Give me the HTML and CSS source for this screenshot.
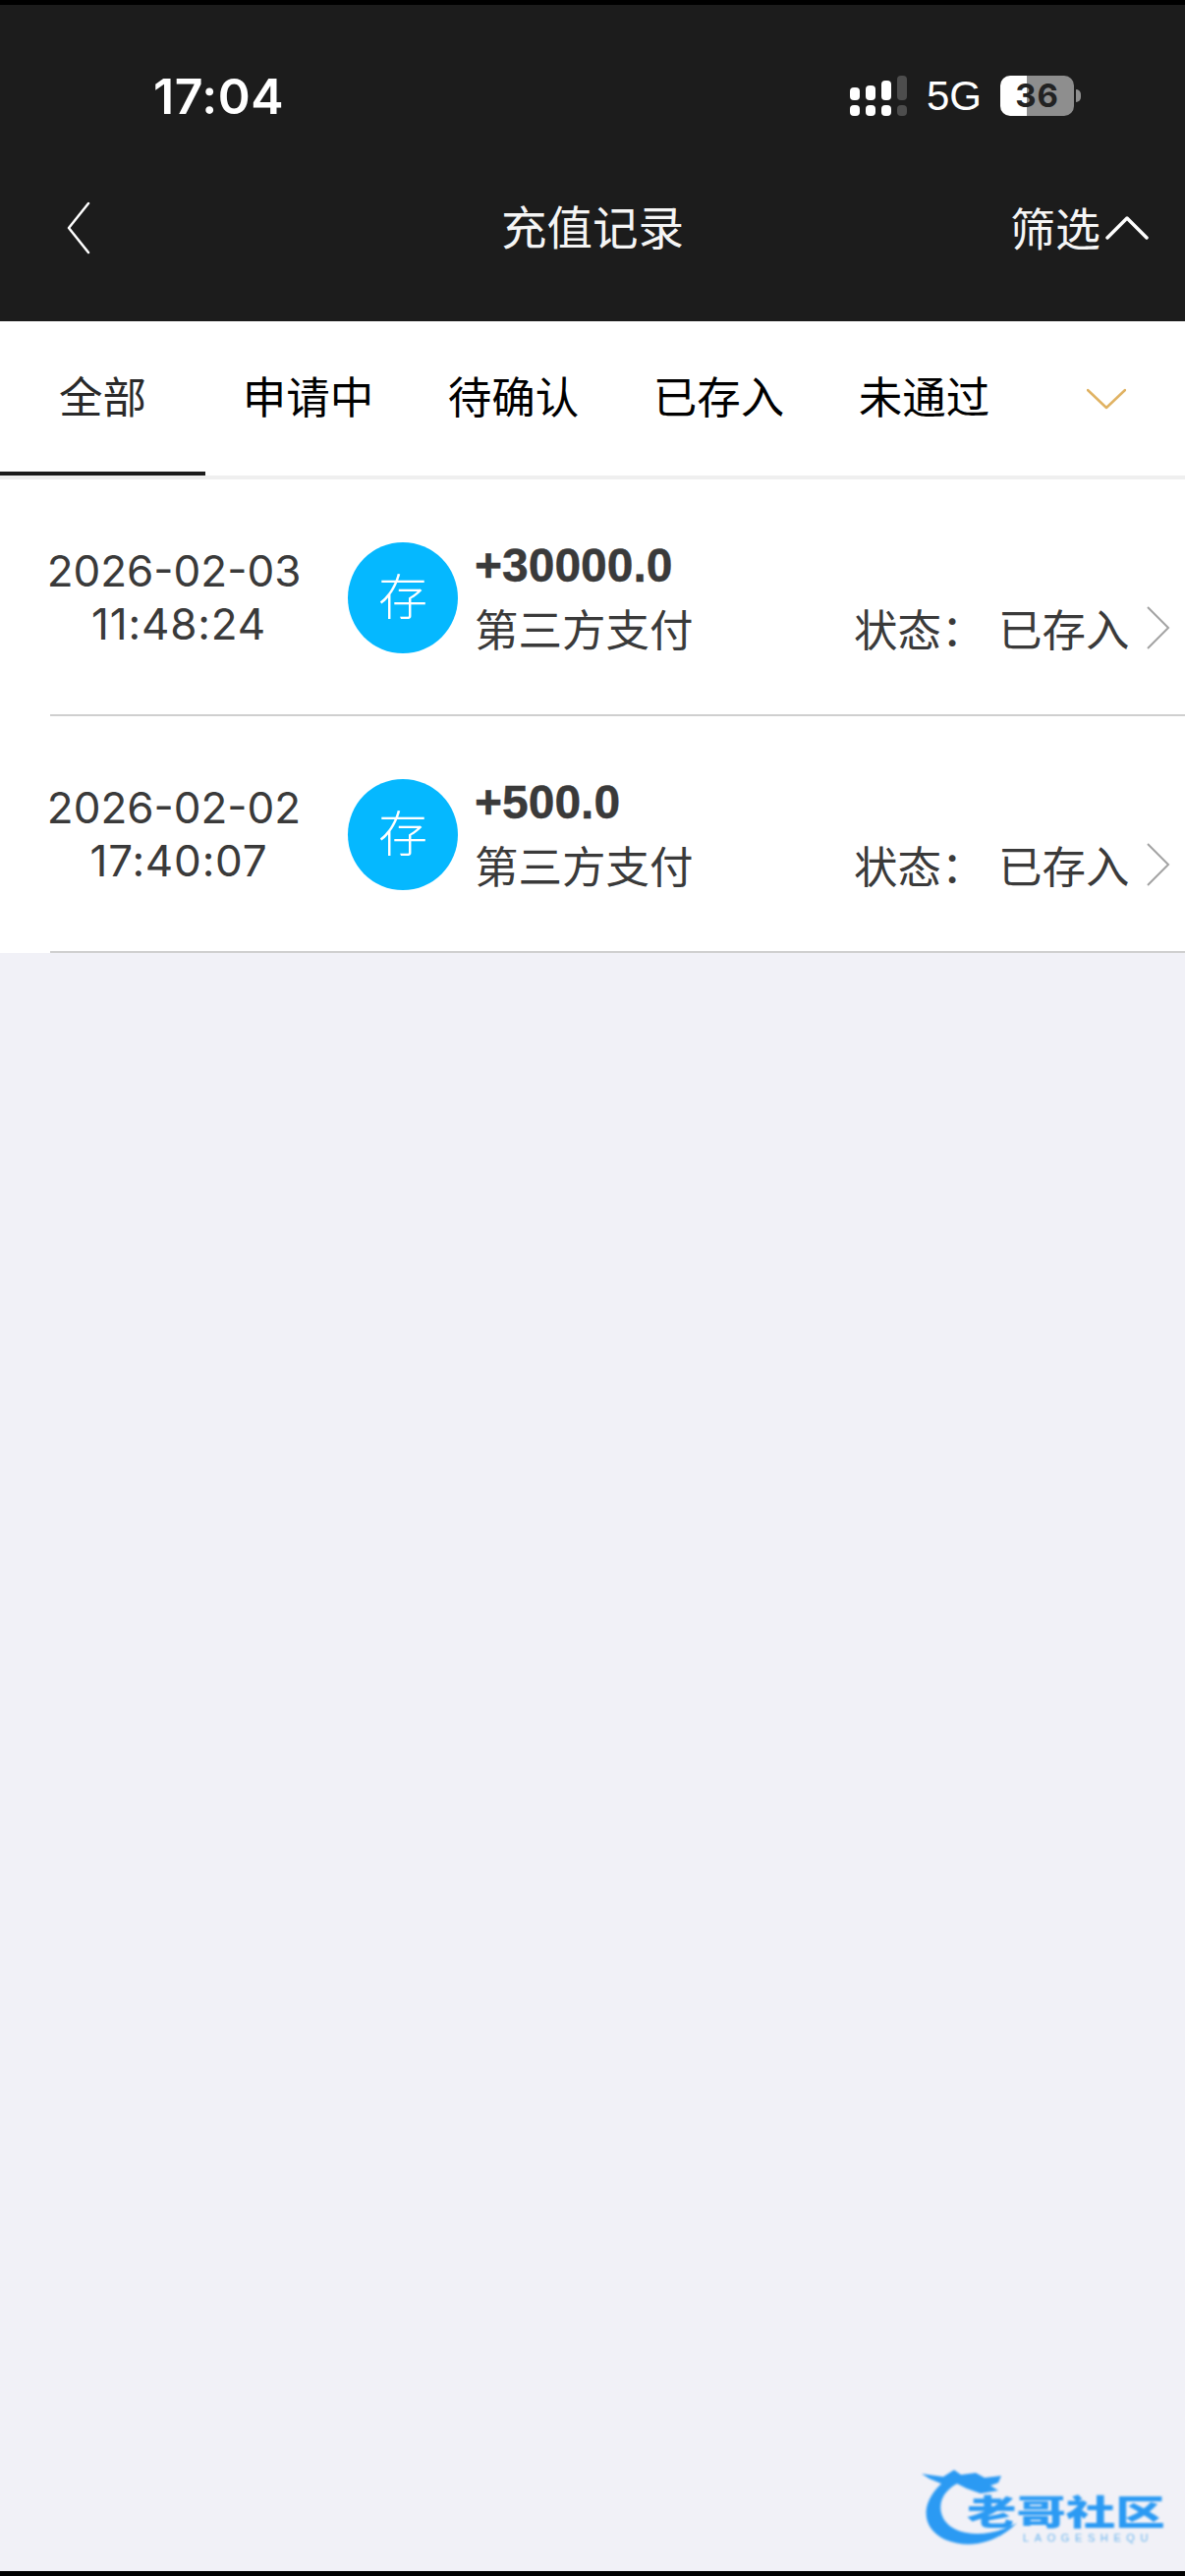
FILE: index.html
```html
<!DOCTYPE html>
<html lang="zh-CN">
<head>
    <meta charset="UTF-8">
    <meta name="viewport" content="width=device-width, initial-scale=1.0">
    <title>充值记录</title>
    <link rel="stylesheet" href="styles.css">
</head>
<body>
    <div class="phone">
        <!-- Status bar and title -->
        <header class="top">
            <div class="status">
                <span class="clock">17:04</span>
                <div class="status-right">
                    <svg class="signal" width="58" height="41" viewBox="0 0 58 41">
                        <rect x="0" y="12" width="10" height="13" rx="4" fill="#fff"/>
                        <rect x="16" y="10" width="10" height="15" rx="4" fill="#fff"/>
                        <rect x="32" y="5" width="10" height="20" rx="4" fill="#fff"/>
                        <rect x="48" y="0" width="10" height="25" rx="4" fill="#4d4d4d"/>
                        <rect x="0" y="30" width="10" height="11" rx="4" fill="#fff"/>
                        <rect x="16" y="30" width="10" height="11" rx="4" fill="#fff"/>
                        <rect x="32" y="30" width="10" height="11" rx="4" fill="#fff"/>
                        <rect x="48" y="30" width="10" height="11" rx="4" fill="#4d4d4d"/>
                    </svg>
                    <span class="network">5G</span>
                    <div class="battery"><span class="battery-num">36</span></div>
                    <span class="battery-tip"></span>
                </div>
            </div>
            <nav class="navbar">
                <svg class="back" width="26" height="54" viewBox="0 0 26 54">
                    <path d="M23 2 L3 27 L23 52" fill="none" stroke="#fff" stroke-width="2.5" stroke-linecap="round" stroke-linejoin="round"/>
                </svg>
                <h1 class="title">充值记录</h1>
                <div class="filter">
                    <span class="filter-label">筛选</span>
                    <svg width="44" height="26" viewBox="0 0 44 26">
                        <path d="M2 23 L22 3 L42 23" fill="none" stroke="#fff" stroke-width="3.5" stroke-linecap="round" stroke-linejoin="round"/>
                    </svg>
                </div>
            </nav>
        </header>

        <!-- Tabs -->
        <div class="tabs">
            <div class="tab active">全部</div>
            <div class="tab">申请中</div>
            <div class="tab">待确认</div>
            <div class="tab">已存入</div>
            <div class="tab">未通过</div>
            <div class="tab tab-more">
                <svg width="40" height="22" viewBox="0 0 40 22">
                    <path d="M1 2 L20 20 L39 2" fill="none" stroke="#e0b262" stroke-width="2.5" stroke-linecap="round" stroke-linejoin="round"/>
                </svg>
            </div>
        </div>

        <!-- Records -->
        <div class="list">
            <div class="row">
                <div class="when">
                    <div>2026-02-03</div>
                    <div class="when-time">11:48:24</div>
                </div>
                <div class="badge">存</div>
                <div class="info">
                    <div class="amount">+30000.0</div>
                    <div class="kind">第三方支付</div>
                </div>
                <div class="state">
                    <span class="state-label">状态：</span>
                    <span>已存入</span>
                    <svg width="24" height="44" viewBox="0 0 24 44">
                        <path d="M1 1 L22 22 L1 43" fill="none" stroke="#a3a3a3" stroke-width="2"/>
                    </svg>
                </div>
            </div>
            <div class="row">
                <div class="when">
                    <div>2026-02-02</div>
                    <div class="when-time">17:40:07</div>
                </div>
                <div class="badge">存</div>
                <div class="info">
                    <div class="amount">+500.0</div>
                    <div class="kind">第三方支付</div>
                </div>
                <div class="state">
                    <span class="state-label">状态：</span>
                    <span>已存入</span>
                    <svg width="24" height="44" viewBox="0 0 24 44">
                        <path d="M1 1 L22 22 L1 43" fill="none" stroke="#a3a3a3" stroke-width="2"/>
                    </svg>
                </div>
            </div>
        </div>

        <div class="empty">
            <!-- Watermark -->
            <div class="mark">
                <svg class="dragon" width="100" height="78" viewBox="0 0 100 78">
                    <path d="M0 5 L22 8 L33 1 L40 6 L55 4 L64 9 L81 7 L78 14 L70 17 L78 22 L60 25 L46 20 L36 15 C20 24 15 38 23 52 C35 70 70 70 97 55 C76 76 48 82 24 72 C2 62 -4 38 20 15 L8 10 Z" fill="#2b9af3"/>
                </svg>
                <div class="mark-text">
                    <div class="mark-cn">老哥社区</div>
                    <div class="mark-en">LAOGESHEQU</div>
                </div>
            </div>
        </div>
        <div class="bottom-edge"></div>
    </div>
</body>
</html>
```

FILE: styles.css
```css
* {
    box-sizing: border-box;
    margin: 0;
    padding: 0;
}
html, body {
    width: 1206px;
    height: 2622px;
    overflow: hidden;
}
body {
    font-family: "Noto Sans CJK SC", "Liberation Sans", sans-serif;
    background-color: #f1f1f7;
}
.phone {
    display: flex;
    flex-direction: column;
    height: 2622px;
}

/* top */
.top {
    height: 327px;
    background-color: #1c1c1c;
    border-top: 5px solid #000;
    color: #fff;
}
.status {
    height: 131px;
    padding: 65px 106px 0 156px;
    display: flex;
    justify-content: space-between;
    align-items: flex-start;
}
.clock {
    font-family: Inter, "Liberation Sans", sans-serif;
    font-size: 50px;
    font-weight: 600;
    line-height: 56px;
    letter-spacing: 0.5px;
}
.status-right {
    display: flex;
    align-items: center;
    height: 41px;
    margin-top: 7px;
}
.signal {
    margin-right: 20px;
}
.network {
    font-family: "Liberation Sans", sans-serif;
    font-size: 42px;
    width: 52px;
    margin-right: 23px;
}
.battery {
    width: 75px;
    height: 41px;
    border-radius: 10px;
    background: linear-gradient(90deg, #fff 0, #fff 27px, #8e8e8e 27px);
    color: #222;
    text-align: center;
}
.battery-num {
    font-family: Inter, "Liberation Sans", sans-serif;
    font-size: 33px;
    font-weight: 700;
    line-height: 41px;
    letter-spacing: 1px;
}
.battery-tip {
    width: 5px;
    height: 13px;
    margin-left: 2px;
    background-color: #8e8e8e;
    border-radius: 0 6px 6px 0;
}
.navbar {
    display: grid;
    grid-template-columns: 1fr auto 1fr;
    align-items: center;
    height: 191px;
    padding: 0 37px;
}
.back {
    margin-left: 30px;
}
.title {
    font-size: 46.5px;
    font-weight: 400;
    line-height: 60px;
    padding-bottom: 5px;
    color: #f5f5f5;
}
.filter {
    justify-self: end;
    display: flex;
    align-items: center;
    gap: 5px;
    font-size: 46px;
    line-height: 60px;
    color: #f5f5f5;
}
.filter-label {
    padding-bottom: 4px;
}

/* tabs */
.tabs {
    display: flex;
    height: 161px;
    background-color: #fff;
    border-bottom: 4px solid #efefef;
}
.tab {
    width: 209px;
    height: 157px;
    line-height: 150px;
    text-align: center;
    font-size: 44.5px;
    color: #000;
}
.tab.active {
    border-bottom: 4px solid #1c1c1c;
    color: #2a2a2a;
}
.tab-more {
    width: 161px;
    line-height: 0;
    display: flex;
    align-items: center;
    justify-content: center;
}

/* records */
.list {
    background-color: #fff;
}
.row {
    height: 241px;
    display: flex;
    align-items: flex-start;
    position: relative;
    color: #3a3a3a;
}
.row::after {
    content: "";
    position: absolute;
    left: 51px;
    right: 0;
    bottom: 0;
    height: 2px;
    background-color: #cfcfcf;
}
.when {
    width: 354px;
    padding-top: 66px;
    text-align: center;
    font-family: Inter, "Liberation Sans", sans-serif;
    font-size: 44px;
    line-height: 54px;
}
.when-time {
    padding-left: 10px;
    letter-spacing: 0.8px;
}
.badge {
    width: 112px;
    height: 113px;
    margin-top: 64px;
    border-radius: 50%;
    background-color: #05b8ff;
    color: #fff;
    font-size: 50px;
    font-weight: 300;
    line-height: 105px;
    text-align: center;
}
.info {
    margin-left: 17px;
    width: 386px;
    padding-top: 60px;
}
.amount {
    font-family: "Liberation Sans", sans-serif;
    font-size: 48px;
    font-weight: 700;
    line-height: 56px;
    -webkit-text-stroke: 0.4px #3a3a3a;
}
.kind {
    font-size: 44.5px;
    line-height: 60px;
    margin-top: 5px;
}
.state {
    display: flex;
    align-items: center;
    padding-top: 121px;
    font-size: 44.5px;
    line-height: 60px;
}
.state-label {
    width: 147px;
}
.state svg {
    margin-left: 17px;
}

/* page below */
.empty {
    flex: 1;
    position: relative;
}
.mark {
    position: absolute;
    left: 938px;
    top: 1543px;
    display: flex;
    align-items: flex-start;
    color: #2b9af3;
    filter: blur(1.2px);
}
.dragon {
    margin-right: -54px;
    flex-shrink: 0;
}
.mark-text {
    margin-top: 22px;
    width: 202px;
}
.mark-cn {
    width: 140px;
    font-size: 35px;
    font-weight: 900;
    line-height: 40px;
    white-space: nowrap;
    transform: scaleX(1.44);
    transform-origin: left center;
}
.mark-en {
    font-family: "Liberation Sans", sans-serif;
    font-size: 11px;
    line-height: 12px;
    letter-spacing: 5.6px;
    margin: 2px 0 0 57px;
    color: #6db6ee;
    white-space: nowrap;
}
.bottom-edge {
    height: 5px;
    background-color: #000;
}
```
